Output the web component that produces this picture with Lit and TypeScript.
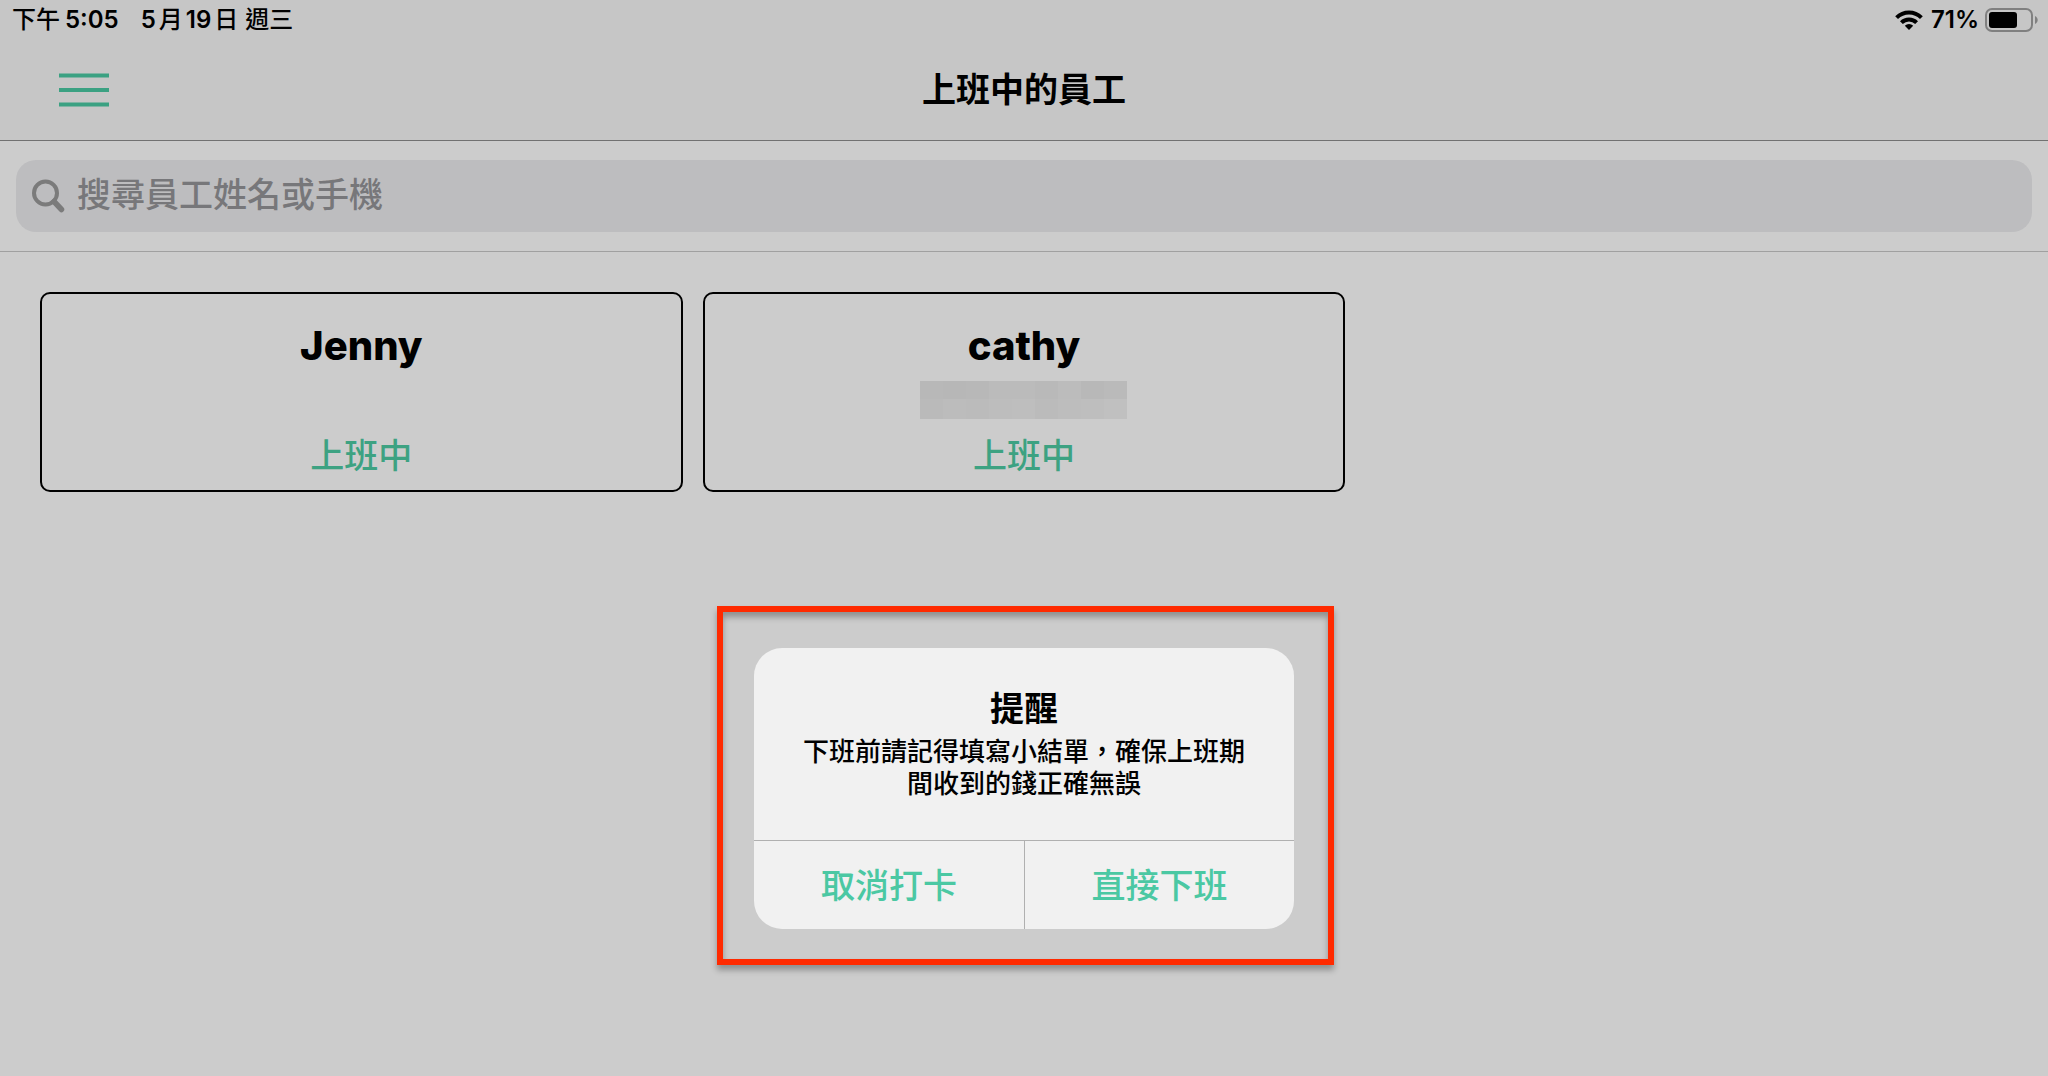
import { LitElement, html, css, nothing } from "lit";
import { customElement, property } from "lit/decorators.js";

interface Employee {
  name: string;
  maskedPhone?: string[];
  status: string;
}

const employees: Employee[] = [
  { name: "Jenny", status: "上班中" },
  {
    name: "cathy",
    maskedPhone: [
      "#b8b8b8", "#b7b7b7", "#b8b8b8", "#bbbbbb", "#bbbbbb", "#b9b9b9", "#bcbcbc", "#b8b8b8", "#bababa",
      "#bababa", "#bcbcbc", "#bbbbbb", "#bdbdbd", "#bebebe", "#bbbbbb", "#bdbdbd", "#bebebe", "#c0c0c0",
    ],
    status: "上班中",
  },
];

@customElement("status-bar")
class StatusBar extends LitElement {
  static styles = css`
    :host {
      display: flex;
      justify-content: space-between;
      align-items: center;
      height: 40px;
      padding: 0 10px 0 12px;
      font-size: 24px;
      font-weight: 600;
      line-height: 40px;
    }
    .clock {
      display: flex;
      gap: 22px;
    }
    .part {
      display: flex;
      align-items: baseline;
      gap: 5px;
    }
    .date {
      gap: 3px;
    }
    .cjk {
      font-weight: 500;
    }
    .weekday {
      padding-left: 4px;
    }
    .indicators {
      display: flex;
      align-items: center;
      gap: 8px;
    }
    .power {
      display: flex;
      align-items: center;
      gap: 6px;
    }
    svg {
      display: block;
    }
  `;
  render() {
    return html`
      <div class="clock">
        <span class="part"><span class="cjk">下午</span><span>5:05</span></span>
        <span class="part date">
          <span>5</span><span class="cjk">月</span><span>19</span><span class="cjk">日</span>
          <span class="cjk weekday">週三</span>
        </span>
      </div>
      <div class="indicators">
        <svg width="28" height="20" viewBox="0 0 28 20" aria-label="Wi-Fi">
          <g fill="none" stroke="#000" stroke-width="4">
            <path d="M1.6 7.6a17.6 17.6 0 0 1 24.8 0" />
            <path d="M6.4 12.6a10.8 10.8 0 0 1 15.2 0" />
          </g>
          <path d="M14 20l-4.2-4.3a6 6 0 0 1 8.4 0z" />
        </svg>
        <span class="power">
          <span>71%</span>
          <svg width="53" height="24" viewBox="0 0 53 24" aria-label="電池">
            <rect x="1" y="1" width="46" height="22" rx="6" fill="none" stroke="#808080" stroke-width="2" />
            <rect x="4" y="4" width="28" height="16" rx="3" />
            <path d="M50 8c3.600 1.400 3.600 6.600 0 8z" fill="#808080" />
          </svg>
        </span>
      </div>
    `;
  }
}

@customElement("employee-card")
class EmployeeCard extends LitElement {
  @property({ attribute: false }) employee!: Employee;

  static styles = css`
    .card {
      box-sizing: border-box;
      width: 100%;
      display: flex;
      flex-direction: column;
      align-items: center;
      padding: 28px 20px 10px;
      border: 2px solid #000;
      border-radius: 10px;
      background: transparent;
      font: inherit;
      color: #000;
    }
    .name {
      font-size: 40px;
      font-weight: 800;
      line-height: 48px;
    }
    .phone {
      display: grid;
      grid-template-columns: repeat(9, 23px);
      grid-template-rows: 18px 20px;
      height: 38px;
      margin: 11px 0 13px;
    }
    .status {
      font-size: 34px;
      font-weight: 500;
      line-height: 48px;
      color: #3da282;
    }
  `;
  render() {
    const { name, maskedPhone, status } = this.employee;
    return html`
      <button class="card" type="button">
        <span class="name">${name}</span>
        <span class="phone">
          ${maskedPhone
            ? maskedPhone.map((shade) => html`<span style="background:${shade}"></span>`)
            : nothing}
        </span>
        <span class="status">${status}</span>
      </button>
    `;
  }
}

@customElement("reminder-alert")
class ReminderAlert extends LitElement {
  static styles = css`
    .alert {
      width: 540px;
      border-radius: 28px;
      overflow: hidden;
      background: #f1f1f1;
      text-align: center;
    }
    .content {
      padding: 37px 42px 40px;
    }
    .title {
      margin: 0;
      font-size: 34px;
      font-weight: 600;
      line-height: 48px;
    }
    .message {
      margin: 3px 0 0;
      font-size: 26px;
      font-weight: 500;
      line-height: 32px;
    }
    .actions {
      display: grid;
      grid-template-columns: 1fr 1fr;
      border-top: 1px solid #b0b0b0;
    }
    .action {
      height: 88px;
      padding: 0 0 4px;
      border: 0;
      background: transparent;
      font: inherit;
      font-size: 34px;
      font-weight: 500;
      color: #4bc8a3;
    }
    .action + .action {
      border-left: 1px solid #b0b0b0;
    }
  `;
  render() {
    return html`
      <div class="alert" role="alertdialog" aria-labelledby="title" aria-describedby="message">
        <div class="content">
          <h2 class="title" id="title">提醒</h2>
          <p class="message" id="message">下班前請記得填寫小結單，確保上班期間收到的錢正確無誤</p>
        </div>
        <div class="actions">
          <button class="action" type="button">取消打卡</button>
          <button class="action" type="button">直接下班</button>
        </div>
      </div>
    `;
  }
}

@customElement("app-root")
class AppRoot extends LitElement {
  static styles = css`
    :host {
      display: block;
      position: relative;
      min-height: 100vh;
      background: #cccccc;
      color: #000;
      font-family: Inter, "Noto Sans CJK TC", sans-serif;
    }
    .header {
      background: #c6c6c6;
      border-bottom: 1px solid #717171;
    }
    .navbar {
      display: grid;
      grid-template-columns: 1fr auto 1fr;
      align-items: center;
      height: 100px;
      padding: 0 59px;
    }
    .menu {
      justify-self: start;
      padding: 0;
      border: 0;
      background: transparent;
    }
    .menu svg,
    .search svg {
      display: block;
    }
    .title {
      margin: 0;
      font-size: 34px;
      font-weight: 600;
      line-height: 48px;
    }
    .searchbar {
      padding: 19px 16px;
      border-bottom: 1px solid #a0a0a0;
    }
    .search {
      display: flex;
      align-items: center;
      gap: 12px;
      height: 72px;
      padding: 0 16px;
      border-radius: 20px;
      background: #bdbdbf;
    }
    .field {
      flex: 1;
      min-width: 0;
      height: 68px;
      padding: 0 0 4px;
      border: 0;
      outline: 0;
      background: transparent;
      font: inherit;
      font-size: 34px;
      font-weight: 500;
      color: #000;
    }
    .field::placeholder {
      color: #77777a;
      opacity: 1;
    }
    .staff {
      display: grid;
      grid-template-columns: repeat(3, 1fr);
      gap: 20px;
      padding: 40px;
    }
    .overlay {
      position: absolute;
      inset: 0;
      display: grid;
      place-content: center;
      padding: 495px 0 0 3px;
    }
    .highlight {
      padding: 36px 34px 30px 31px;
      border: 6px solid #ff2a00;
      box-shadow:
        0 5px 6px rgba(0, 0, 0, 0.3),
        inset 0 5px 6px rgba(0, 0, 0, 0.3);
    }
  `;
  render() {
    return html`
      <header class="header">
        <status-bar></status-bar>
        <nav class="navbar">
          <button class="menu" type="button" aria-label="選單">
            <svg width="50" height="34" viewBox="0 0 50 34">
              <path d="M0 2.500h50M0 17h50M0 31.500h50" stroke="#3ba182" stroke-width="4" />
            </svg>
          </button>
          <h1 class="title">上班中的員工</h1>
        </nav>
      </header>
      <div class="searchbar">
        <label class="search">
          <svg width="33" height="34" viewBox="0 0 33 34" aria-hidden="true">
            <g fill="none" stroke="#7b7b7b">
              <circle cx="13.500" cy="14" r="11.500" stroke-width="4" />
              <path d="M22 22.500l7.500 8" stroke-width="5.500" stroke-linecap="round" />
            </g>
          </svg>
          <input class="field" type="text" placeholder="搜尋員工姓名或手機" aria-label="搜尋員工姓名或手機" />
        </label>
      </div>
      <main class="staff">
        ${employees.map((employee) => html`<employee-card .employee=${employee}></employee-card>`)}
      </main>
      <div class="overlay">
        <div class="highlight">
          <reminder-alert></reminder-alert>
        </div>
      </div>
    `;
  }
}
